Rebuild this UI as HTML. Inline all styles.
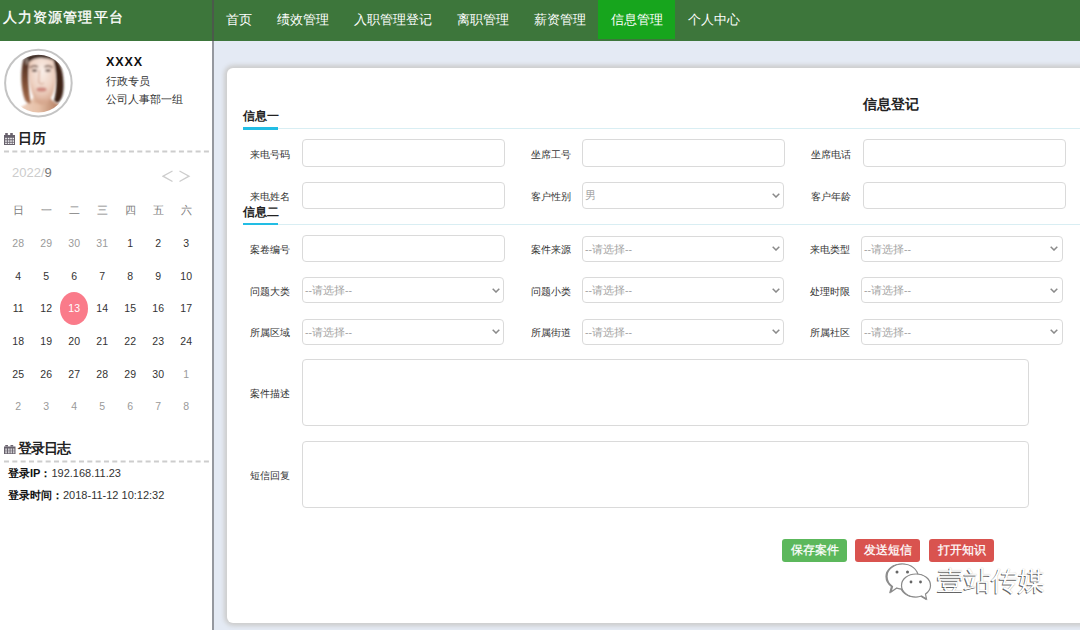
<!DOCTYPE html>
<html><head><meta charset="utf-8">
<style>
*{box-sizing:border-box;margin:0;padding:0}
html,body{width:1080px;height:630px;overflow:hidden}
body{position:relative;background:#e4eaf4;font-family:"Liberation Sans",sans-serif;color:#333}
.abs{position:absolute}
#hdr{left:0;top:0;width:1080px;height:41px;background:#3d763b}
#title{left:3px;top:9px;font-size:14px;color:#fff;font-family:"Liberation Serif",serif;white-space:nowrap;letter-spacing:1.1px;-webkit-text-stroke:0.35px #fff}
#vline{left:212px;top:0;width:2px;height:630px;background:#95989f}
#vline2{left:212px;top:0;width:2px;height:41px;background:#4b5a4b}
#nav{left:213px;top:0;height:40px;white-space:nowrap;font-size:0}
#nav span{display:inline-block;height:39px;line-height:40px;padding:0 12.5px;font-size:13px;color:#fff}
#nav span.act{background:#17a51d}
#side{left:0;top:41px;width:212px;height:589px;background:#fff}
#card{left:227px;top:68px;width:900px;height:555px;background:#fff;border-radius:6px;box-shadow:0 0 4px 3px #cdcdcd}
.t{position:absolute;white-space:nowrap;line-height:1}
.lbl{position:absolute;margin-top:1px;white-space:nowrap;font-size:10.2px;line-height:12px;color:#333}
.inp{position:absolute;border:1px solid #dadada;border-radius:4px;background:#fff}
.sel{position:absolute;border:1px solid #dadada;border-radius:4px;background:#fff;font-size:10.5px;color:#a3a3a3;line-height:24px;padding-left:2px;white-space:nowrap}
.sel svg{position:absolute;right:3.5px;top:9.5px}
.cal{position:absolute;font-size:10.5px;line-height:12px;text-align:center;width:28px}
.btn{position:absolute;height:23px;border-radius:3px;color:#fff;-webkit-text-stroke:0.25px #fff;font-size:11.5px;line-height:23px;text-align:center;width:65px}
</style></head><body>
<div id="hdr" class="abs"></div>
<div id="title" class="abs">人力资源管理平台</div>
<div id="nav" class="abs"><span>首页</span><span>绩效管理</span><span>入职管理登记</span><span>离职管理</span><span>薪资管理</span><span class="act">信息管理</span><span>个人中心</span></div>
<div id="side" class="abs"></div>

<svg class="abs" style="left:0;top:40px" width="80" height="85" viewBox="0 40 80 85">
<defs>
<clipPath id="cc"><circle cx="38.4" cy="83.6" r="28.8"/></clipPath>
<radialGradient id="skin" cx="0.5" cy="0.3" r="0.75"><stop offset="0" stop-color="#f9eee8"/><stop offset="0.55" stop-color="#efd3c4"/><stop offset="1" stop-color="#d09b80"/></radialGradient>
<linearGradient id="nk" x1="0" y1="0" x2="1" y2="0"><stop offset="0" stop-color="#f3dccd"/><stop offset="0.5" stop-color="#e6bfa6"/><stop offset="1" stop-color="#9c5e40"/></linearGradient>
<linearGradient id="hl" x1="0" y1="0" x2="0" y2="1"><stop offset="0" stop-color="#4b2f23"/><stop offset="0.5" stop-color="#7a4a32"/><stop offset="1" stop-color="#a66c4c"/></linearGradient>
<filter id="bl" x="-10%" y="-10%" width="120%" height="120%"><feGaussianBlur stdDeviation="0.9"/></filter>
</defs>
<circle cx="38.4" cy="83.1" r="33.3" fill="#fff" stroke="#c4c4c4" stroke-width="2"/>
<g clip-path="url(#cc)"><g filter="url(#bl)">
<path d="M14 110 C24 106 31 102 34 96 L50 96 C51 101 56 104 64 106 L68 116 L10 116Z" fill="url(#nk)"/>
<path d="M23.5 59 C20.5 70 20.5 88 25 100 C26.5 103 29 104 31 103 C28.5 92 27.5 74 29.5 62Z" fill="url(#hl)"/>
<path d="M52 57 C59 60 63 68 63.5 82 C64 92 62.5 99 58 103 L54 101 C57 90 57.5 72 52 57Z" fill="#3e2419"/>
<path d="M29.5 61 C36 56 48 56 53 60 C56.5 70 56.5 86 52.5 95 C49 102 44 105 40 104.5 C35 102 31 94 29.5 82 C28.5 72 28.5 66 29.5 61Z" fill="url(#skin)"/>
<path d="M23.5 59 C30 53 44 52 55 57 L52.5 60 C44 57 34 57 29.5 62Z" fill="#3e2a22"/>
<ellipse cx="26.8" cy="61.5" rx="1.5" ry="3.5" fill="#b9aaa2" opacity="0.6"/>
<ellipse cx="41" cy="101.5" rx="8" ry="2.5" fill="#d8a88e" opacity="0.5"/>
<path d="M30 67.6 Q33.5 65 38 66.8" stroke="#5a3a2e" stroke-width="1.4" fill="none"/>
<path d="M44.5 66.8 Q49 65 52.5 67.6" stroke="#5a3a2e" stroke-width="1.4" fill="none"/>
<ellipse cx="34.5" cy="70.6" rx="2.8" ry="1.4" fill="#6a5650"/>
<ellipse cx="48" cy="70.6" rx="2.8" ry="1.4" fill="#6a5650"/>
<path d="M39.5 70 C39 76 38.5 80 39 83 Q41.5 85.5 44 83" stroke="#cf9f88" stroke-width="1" fill="none"/>
<ellipse cx="41.5" cy="89.5" rx="5" ry="2.2" fill="#cf8a80"/>
</g></g>
</svg>
<div class="t" style="left:106px;top:56px;font-size:12.5px;font-weight:bold;color:#111;letter-spacing:0.9px">XXXX</div>
<div class="t" style="left:106px;top:75.5px;font-size:11px;color:#333">行政专员</div>
<div class="t" style="left:106px;top:94px;font-size:11px;color:#333">公司人事部一组</div>
<svg class="abs" style="left:4px;top:133px" width="11" height="12" viewBox="0 0 11 12">
<rect x="0" y="2" width="11" height="10" fill="#67616c"/>
<rect x="1.2" y="0" width="2.6" height="2" fill="#6d6570"/><rect x="6.2" y="0" width="2.6" height="2" fill="#6d6570"/>
<g fill="#f4f4f6"><rect x="1.2" y="4.8" width="1.6" height="1.5"/><rect x="3.8" y="4.8" width="1.6" height="1.5"/><rect x="6.2" y="4.8" width="1.6" height="1.5"/><rect x="8.6" y="4.8" width="1.4" height="1.5"/>
<rect x="1.2" y="7.3" width="1.6" height="1.5"/><rect x="3.8" y="7.3" width="1.6" height="1.5"/><rect x="6.2" y="7.3" width="1.6" height="1.5"/><rect x="8.6" y="7.3" width="1.4" height="1.5"/>
<rect x="1.2" y="9.7" width="1.6" height="1.3"/><rect x="3.8" y="9.7" width="1.6" height="1.3"/><rect x="6.2" y="9.7" width="1.6" height="1.3"/><rect x="8.6" y="9.7" width="1.4" height="1.3"/></g>
</svg>
<div class="t" style="left:17.5px;top:131px;font-size:14px;font-weight:bold;color:#222">日历</div>
<svg class="abs" style="left:4px;top:150px" width="205" height="3"><line x1="0" y1="1.5" x2="205" y2="1.5" stroke="#cdcdcd" stroke-width="2" stroke-dasharray="5 3.33"/></svg>
<div class="t" style="left:12px;top:166px;font-size:13px;color:#ccc">2022/<span style="color:#777">9</span></div>
<svg class="abs" style="left:162px;top:170px" width="30" height="13" viewBox="0 0 30 13">
<path d="M10.5 1 L1 6.2 L10.5 11.5" stroke="#cdcdcd" stroke-width="1.35" fill="none"/>
<path d="M17.5 1 L27 6.2 L17.5 11.5" stroke="#cdcdcd" stroke-width="1.35" fill="none"/>
</svg>

<!--cal--><div class="cal" style="left:4.2px;top:204px;color:#808080">日</div><div class="cal" style="left:32.2px;top:204px;color:#808080">一</div><div class="cal" style="left:60.2px;top:204px;color:#808080">二</div><div class="cal" style="left:88.2px;top:204px;color:#808080">三</div><div class="cal" style="left:116.2px;top:204px;color:#808080">四</div><div class="cal" style="left:144.2px;top:204px;color:#808080">五</div><div class="cal" style="left:172.2px;top:204px;color:#808080">六</div><div class="cal" style="left:4.2px;top:236.9px;color:#9a9a9a">28</div><div class="cal" style="left:32.2px;top:236.9px;color:#9a9a9a">29</div><div class="cal" style="left:60.2px;top:236.9px;color:#9a9a9a">30</div><div class="cal" style="left:88.2px;top:236.9px;color:#9a9a9a">31</div><div class="cal" style="left:116.2px;top:236.9px;color:#333">1</div><div class="cal" style="left:144.2px;top:236.9px;color:#333">2</div><div class="cal" style="left:172.2px;top:236.9px;color:#333">3</div><div class="cal" style="left:4.2px;top:269.6px;color:#333">4</div><div class="cal" style="left:32.2px;top:269.6px;color:#333">5</div><div class="cal" style="left:60.2px;top:269.6px;color:#333">6</div><div class="cal" style="left:88.2px;top:269.6px;color:#333">7</div><div class="cal" style="left:116.2px;top:269.6px;color:#333">8</div><div class="cal" style="left:144.2px;top:269.6px;color:#333">9</div><div class="cal" style="left:172.2px;top:269.6px;color:#333">10</div><div class="cal" style="left:4.2px;top:302.3px;color:#333">11</div><div class="cal" style="left:32.2px;top:302.3px;color:#333">12</div><div class="abs" style="left:60.2px;top:292.2px;width:28px;height:32.4px;border-radius:50%;background:#fa7b8a"></div><div class="cal" style="left:60.2px;top:302.3px;color:#fff">13</div><div class="cal" style="left:88.2px;top:302.3px;color:#333">14</div><div class="cal" style="left:116.2px;top:302.3px;color:#333">15</div><div class="cal" style="left:144.2px;top:302.3px;color:#333">16</div><div class="cal" style="left:172.2px;top:302.3px;color:#333">17</div><div class="cal" style="left:4.2px;top:335.0px;color:#333">18</div><div class="cal" style="left:32.2px;top:335.0px;color:#333">19</div><div class="cal" style="left:60.2px;top:335.0px;color:#333">20</div><div class="cal" style="left:88.2px;top:335.0px;color:#333">21</div><div class="cal" style="left:116.2px;top:335.0px;color:#333">22</div><div class="cal" style="left:144.2px;top:335.0px;color:#333">23</div><div class="cal" style="left:172.2px;top:335.0px;color:#333">24</div><div class="cal" style="left:4.2px;top:367.7px;color:#333">25</div><div class="cal" style="left:32.2px;top:367.7px;color:#333">26</div><div class="cal" style="left:60.2px;top:367.7px;color:#333">27</div><div class="cal" style="left:88.2px;top:367.7px;color:#333">28</div><div class="cal" style="left:116.2px;top:367.7px;color:#333">29</div><div class="cal" style="left:144.2px;top:367.7px;color:#333">30</div><div class="cal" style="left:172.2px;top:367.7px;color:#9a9a9a">1</div><div class="cal" style="left:4.2px;top:400.4px;color:#9a9a9a">2</div><div class="cal" style="left:32.2px;top:400.4px;color:#9a9a9a">3</div><div class="cal" style="left:60.2px;top:400.4px;color:#9a9a9a">4</div><div class="cal" style="left:88.2px;top:400.4px;color:#9a9a9a">5</div><div class="cal" style="left:116.2px;top:400.4px;color:#9a9a9a">6</div><div class="cal" style="left:144.2px;top:400.4px;color:#9a9a9a">7</div><div class="cal" style="left:172.2px;top:400.4px;color:#9a9a9a">8</div><!--/cal--><svg class="abs" style="left:4px;top:444.8px" width="11.5" height="9" viewBox="0 0 11 12" preserveAspectRatio="none">
<rect x="0" y="2" width="11" height="10" fill="#67616c"/>
<rect x="1.2" y="0" width="2.6" height="2" fill="#6d6570"/><rect x="6.2" y="0" width="2.6" height="2" fill="#6d6570"/>
<g fill="#f4f4f6"><rect x="1.2" y="4.8" width="1.6" height="1.5"/><rect x="3.8" y="4.8" width="1.6" height="1.5"/><rect x="6.2" y="4.8" width="1.6" height="1.5"/><rect x="8.6" y="4.8" width="1.4" height="1.5"/>
<rect x="1.2" y="7.3" width="1.6" height="1.5"/><rect x="3.8" y="7.3" width="1.6" height="1.5"/><rect x="6.2" y="7.3" width="1.6" height="1.5"/><rect x="8.6" y="7.3" width="1.4" height="1.5"/>
<rect x="1.2" y="9.7" width="1.6" height="1.3"/><rect x="3.8" y="9.7" width="1.6" height="1.3"/><rect x="6.2" y="9.7" width="1.6" height="1.3"/><rect x="8.6" y="9.7" width="1.4" height="1.3"/></g>
</svg>
<div class="t" style="left:18px;top:440.5px;font-size:14px;font-weight:bold;color:#222;letter-spacing:-0.9px">登录日志</div>
<svg class="abs" style="left:4px;top:459.5px" width="205" height="3"><line x1="0" y1="1.5" x2="205" y2="1.5" stroke="#cdcdcd" stroke-width="2" stroke-dasharray="5 3.33"/></svg>
<div class="t" style="left:8px;top:468px;font-size:11px;color:#333"><b style="color:#111">登录IP：</b>192.168.11.23</div>
<div class="t" style="left:8px;top:489.5px;font-size:11px;color:#333"><b style="color:#111">登录时间：</b>2018-11-12 10:12:32</div>
<div id="vline" class="abs"></div>
<div id="vline2" class="abs"></div>
<div id="card" class="abs"></div>
<div class="t" style="left:863px;top:96.5px;font-size:14px;font-weight:bold;color:#222">信息登记</div><div class="t" style="left:243px;top:110px;font-size:12px;font-weight:bold;color:#222">信息一</div><div class="abs" style="left:243px;top:128px;width:837px;height:1px;background:#d9eef3"></div><div class="abs" style="left:243px;top:127px;width:35px;height:2.5px;background:#22bde4"></div><div class="lbl" style="left:250px;top:147.5px">来电号码</div><div class="inp" style="left:302px;top:139px;width:203px;height:28px"></div><div class="lbl" style="left:531px;top:147.5px">坐席工号</div><div class="inp" style="left:582px;top:139px;width:203px;height:28px"></div><div class="lbl" style="left:811px;top:147.5px">坐席电话</div><div class="inp" style="left:863px;top:139px;width:203px;height:28px"></div><div class="lbl" style="left:250px;top:189.5px">来电姓名</div><div class="inp" style="left:302px;top:181.5px;width:203px;height:27.5px"></div><div class="lbl" style="left:531px;top:189.5px">客户性别</div><div class="sel" style="left:582px;top:182px;width:202px;height:27px">男<svg width="8" height="5" viewBox="0 0 8 5"><path d="M0.7 0.7 L4 4 L7.3 0.7" stroke="#8a8a8a" stroke-width="1.5" fill="none"/></svg></div><div class="lbl" style="left:811px;top:189.5px">客户年龄</div><div class="inp" style="left:863px;top:181.5px;width:203px;height:27.5px"></div><div class="t" style="left:243px;top:205.5px;font-size:12px;font-weight:bold;color:#222">信息二</div><div class="abs" style="left:243px;top:224px;width:837px;height:1px;background:#d9eef3"></div><div class="abs" style="left:243px;top:222.5px;width:35px;height:2.5px;background:#22bde4"></div><div class="lbl" style="left:250px;top:243.3px">案卷编号</div><div class="inp" style="left:302px;top:235px;width:203px;height:27px"></div><div class="lbl" style="left:531px;top:243.3px">案件来源</div><div class="sel" style="left:582px;top:235.5px;width:202px;height:26.0px">--请选择--<svg width="8" height="5" viewBox="0 0 8 5"><path d="M0.7 0.7 L4 4 L7.3 0.7" stroke="#8a8a8a" stroke-width="1.5" fill="none"/></svg></div><div class="lbl" style="left:810px;top:243.3px">来电类型</div><div class="sel" style="left:861px;top:235.5px;width:201.5px;height:26.0px">--请选择--<svg width="8" height="5" viewBox="0 0 8 5"><path d="M0.7 0.7 L4 4 L7.3 0.7" stroke="#8a8a8a" stroke-width="1.5" fill="none"/></svg></div><div class="lbl" style="left:250px;top:285px">问题大类</div><div class="sel" style="left:302px;top:277px;width:202px;height:26.0px">--请选择--<svg width="8" height="5" viewBox="0 0 8 5"><path d="M0.7 0.7 L4 4 L7.3 0.7" stroke="#8a8a8a" stroke-width="1.5" fill="none"/></svg></div><div class="lbl" style="left:531px;top:285px">问题小类</div><div class="sel" style="left:582px;top:277px;width:202px;height:26.0px">--请选择--<svg width="8" height="5" viewBox="0 0 8 5"><path d="M0.7 0.7 L4 4 L7.3 0.7" stroke="#8a8a8a" stroke-width="1.5" fill="none"/></svg></div><div class="lbl" style="left:810px;top:285px">处理时限</div><div class="sel" style="left:861px;top:277px;width:201.5px;height:26.0px">--请选择--<svg width="8" height="5" viewBox="0 0 8 5"><path d="M0.7 0.7 L4 4 L7.3 0.7" stroke="#8a8a8a" stroke-width="1.5" fill="none"/></svg></div><div class="lbl" style="left:250px;top:326px">所属区域</div><div class="sel" style="left:302px;top:318.5px;width:202px;height:26.0px">--请选择--<svg width="8" height="5" viewBox="0 0 8 5"><path d="M0.7 0.7 L4 4 L7.3 0.7" stroke="#8a8a8a" stroke-width="1.5" fill="none"/></svg></div><div class="lbl" style="left:531px;top:326px">所属街道</div><div class="sel" style="left:582px;top:318.5px;width:202px;height:26.0px">--请选择--<svg width="8" height="5" viewBox="0 0 8 5"><path d="M0.7 0.7 L4 4 L7.3 0.7" stroke="#8a8a8a" stroke-width="1.5" fill="none"/></svg></div><div class="lbl" style="left:810px;top:326px">所属社区</div><div class="sel" style="left:861px;top:318.5px;width:201.5px;height:26.0px">--请选择--<svg width="8" height="5" viewBox="0 0 8 5"><path d="M0.7 0.7 L4 4 L7.3 0.7" stroke="#8a8a8a" stroke-width="1.5" fill="none"/></svg></div><div class="lbl" style="left:250px;top:387px">案件描述</div><div class="inp" style="left:302px;top:359px;width:727px;height:67px"></div><div class="lbl" style="left:250px;top:468.5px">短信回复</div><div class="inp" style="left:302px;top:441px;width:727px;height:66.5px"></div><div class="btn" style="left:782px;top:539px;background:#5cb85c">保存案件</div><div class="btn" style="left:855px;top:539px;background:#d9534f">发送短信</div><div class="btn" style="left:929px;top:539px;background:#d9534f">打开知识</div>

<svg class="abs" style="left:885px;top:560.5px" width="50" height="42" viewBox="0 0 50 42">
<g fill="#fff" stroke="#8a8a8a" stroke-width="1.2" style="filter:drop-shadow(-0.6px 0.8px 0.6px rgba(0,0,0,.45))">
<path d="M17.5 3 C26 3 33 8.5 33 15.5 C33 22.5 26 28 17.5 28 C15.5 28 13.5 27.6 11.8 27 L6 31 L7.5 25.5 C4 23 2 19.5 2 15.5 C2 8.5 9 3 17.5 3Z"/>
<path d="M31 13 C39 13 45.5 18 45.5 24.5 C45.5 28 43.5 31 40.5 33 L41.5 38 L36.5 35 C34.8 35.6 33 36 31 36 C23 36 16.5 30.8 16.5 24.5 C16.5 18 23 13 31 13Z"/>
</g>
<g fill="#666"><circle cx="12" cy="11" r="1.5"/><circle cx="22.5" cy="11" r="1.5"/><circle cx="26" cy="21" r="1.4"/><circle cx="35.5" cy="21" r="1.4"/></g>
</svg>
<div class="t" style="left:937px;top:567.5px;font-size:27px;color:#fff;text-shadow:-1px 1px 0.6px rgba(0,0,0,.6),0 0 1px rgba(0,0,0,.3);letter-spacing:0px">壹站传媒</div>
</body></html>
